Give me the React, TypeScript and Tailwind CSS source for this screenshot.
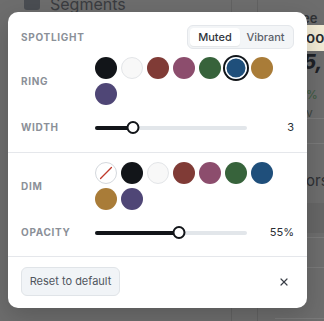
import React, { useState } from "react";
import { X } from "lucide-react";

type Swatch = { id: string; color: string | null };

const RING_COLORS: Swatch[] = [
  { id: "black", color: "#121519" },
  { id: "white", color: "#f8f8f8" },
  { id: "red", color: "#803b36" },
  { id: "plum", color: "#8c4d6d" },
  { id: "green", color: "#37633b" },
  { id: "blue", color: "#1f4f7b" },
  { id: "gold", color: "#a97c38" },
  { id: "purple", color: "#4f4676" },
];

const DIM_COLORS: Swatch[] = [{ id: "none", color: null }, ...RING_COLORS];

const Label = ({ children }: { children: React.ReactNode }) => (
  <span className="w-[74px] shrink-0 text-[10px] font-bold uppercase tracking-[0.07em] text-[#8b9098]">
    {children}
  </span>
);

const SwatchButton = ({
  swatch,
  selected,
  onClick,
}: {
  swatch: Swatch;
  selected: boolean;
  onClick: () => void;
}) => {
  if (swatch.color === null) {
    return (
      <button
        onClick={onClick}
        className="relative h-[22px] w-[22px] rounded-full border border-[#d4d8dd] bg-white overflow-hidden"
      >
        <svg viewBox="0 0 22 22" className="absolute inset-0 h-full w-full">
          <line x1="5" y1="17" x2="17" y2="5" stroke="#c0392b" strokeWidth="1.4" strokeLinecap="round" />
        </svg>
      </button>
    );
  }
  const isWhite = swatch.id === "white";
  return (
    <button
      onClick={onClick}
      style={{ backgroundColor: swatch.color }}
      className={
        "h-[22px] w-[22px] rounded-full " +
        (isWhite ? "border border-[#e3e5e8] " : "") +
        (selected ? "shadow-[inset_0_0_0_1.5px_#fff,0_0_0_2px_#121519]" : "")
      }
    />
  );
};

const Slider = ({ value, min, max }: { value: number; min: number; max: number }) => {
  const pct = ((value - min) / (max - min)) * 100;
  return (
    <div className="relative flex h-[15px] w-[152px] items-center">
      <div className="h-[4px] w-full rounded-full bg-[#e2e6ea]" />
      <div className="absolute left-0 h-[4px] rounded-full bg-[#121519]" style={{ width: `${pct}%` }} />
      <div
        className="absolute h-[13px] w-[13px] -translate-x-1/2 rounded-full border-2 border-[#121519] bg-white"
        style={{ left: `${pct}%` }}
      />
    </div>
  );
};

const Backdrop = () => (
  <div className="absolute inset-0 bg-[#6d6d6d]">
    <div className="flex items-start gap-[10px] pl-[24px] pt-0">
      <div className="-mt-[6px] h-[16px] w-[16px] rounded-[3px] bg-[#4a4d52]" />
      <span className="-mt-[4px] text-[16px] leading-[16px] text-[#3a3c40]">Segments</span>
    </div>
    <div className="absolute left-[231px] top-0 h-full w-px bg-[#626262]" />
    <div className="absolute left-[257px] top-0 h-full w-px bg-[#626262]" />
    <div className="absolute left-[302px] top-[12px] text-[13px] font-semibold leading-[13px] text-[#303235]">ee</div>
    <div className="absolute left-[300px] top-[25px] flex h-[26px] w-[40px] items-center bg-[#f3ecd6] pl-[6px] text-[15px] font-semibold text-[#2a2c30]">
      oor
    </div>
    <div className="absolute left-[303px] top-[52px] text-[20px] font-extrabold italic leading-[20px] text-[#1e2126]">5,</div>
    <div className="absolute left-[306px] top-[86px] text-[12px] text-[#3d4540]">
      <span className="text-[#3b5a3f]">%</span> v
    </div>
    <div className="absolute left-[257px] top-[118px] h-px w-[70px] bg-[#7a7a7a]" />
    <div className="absolute left-[257px] top-[143px] h-px w-[70px] bg-[#7a7a7a]" />
    <div className="absolute left-[306px] top-[170px] text-[15px] text-[#2e3034]">ors</div>
    <div className="absolute left-[257px] top-[203px] h-[30px] w-[70px] bg-[#666666]" />
    <div className="absolute left-[257px] top-[237px] h-px w-[70px] bg-[#7a7a7a]" />
    <div className="absolute left-[257px] top-[267px] h-px w-[70px] bg-[#7a7a7a]" />
    <div className="absolute left-[275px] top-[318px] h-px w-[50px] bg-[#7a7a7a]" />
  </div>
);

export default function App() {
  const [mode, setMode] = useState<"muted" | "vibrant">("muted");
  const [ring, setRing] = useState("blue");
  const [dim, setDim] = useState("");

  return (
    <div
      className="relative h-[321px] w-[324px] overflow-hidden"
      style={{ fontFamily: "Inter, 'Liberation Sans', sans-serif" }}
    >
      <Backdrop />
      <div className="absolute left-[8px] top-[12px] flex w-[299px] flex-col rounded-[10px] bg-white shadow-[0_8px_24px_rgba(0,0,0,0.18)]">
        <div className="flex flex-col px-[13px] pb-[17px] pt-[13px]">
          <div className="flex h-[24px] items-center justify-between">
            <Label>Spotlight</Label>
            <div className="flex h-[24px] w-[107px] items-center rounded-[6px] border border-[#e4e7eb] bg-[#f3f5f7] p-[2px]">
              <button
                onClick={() => setMode("muted")}
                className={
                  "h-[18px] w-[50px] rounded-[4px] text-[11px] font-medium " +
                  (mode === "muted" ? "bg-white text-[#2f343b] shadow-[0_1px_1px_rgba(0,0,0,0.06)]" : "text-[#5b616a]")
                }
              >
                Muted
              </button>
              <button
                onClick={() => setMode("vibrant")}
                className={
                  "h-[18px] flex-1 rounded-[4px] text-[11px] font-medium " +
                  (mode === "vibrant" ? "bg-white text-[#2f343b] shadow-[0_1px_1px_rgba(0,0,0,0.06)]" : "text-[#5b616a]")
                }
              >
                Vibrant
              </button>
            </div>
          </div>

          <div className="mt-[8px] flex items-center">
            <Label>Ring</Label>
            <div className="flex w-[200px] flex-wrap gap-[4px]">
              {RING_COLORS.map((s) => (
                <SwatchButton key={s.id} swatch={s} selected={ring === s.id} onClick={() => setRing(s.id)} />
              ))}
            </div>
          </div>

          <div className="mt-[15px] flex h-[15px] items-center">
            <Label>Width</Label>
            <Slider value={3} min={1} max={9} />
            <span className="ml-auto text-[11px] text-[#2a2e34]">3</span>
          </div>
        </div>

        <div className="h-px bg-[#e5e7eb]" />

        <div className="flex flex-col px-[13px] pb-[16px] pt-[9px]">
          <div className="flex items-center">
            <Label>Dim</Label>
            <div className="flex w-[200px] flex-wrap gap-[4px]">
              {DIM_COLORS.map((s) => (
                <SwatchButton key={s.id} swatch={s} selected={dim === s.id} onClick={() => setDim(s.id)} />
              ))}
            </div>
          </div>

          <div className="mt-[15px] flex h-[15px] items-center">
            <Label>Opacity</Label>
            <Slider value={55} min={0} max={100} />
            <span className="ml-auto text-[11px] text-[#2a2e34]">55%</span>
          </div>
        </div>

        <div className="h-px bg-[#e5e7eb]" />

        <div className="flex items-center justify-between px-[13px] pb-[12px] pt-[10px]">
          <button className="h-[29px] w-[99px] rounded-[6px] border border-[#e0e4e8] bg-[#f1f4f7] text-[11px] text-[#50565e]">
            Reset to default
          </button>
          <button className="mr-[2px] flex h-[16px] w-[16px] items-center justify-center text-[#3b4048]">
            <X size={12} strokeWidth={2.4} />
          </button>
        </div>
      </div>
    </div>
  );
}
